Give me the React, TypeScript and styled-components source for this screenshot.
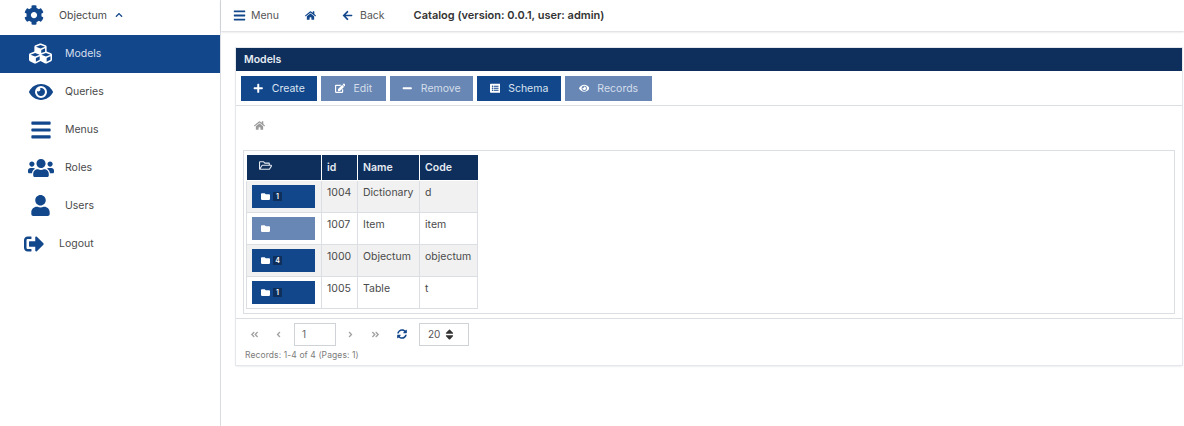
import React from 'react';
import styled, { createGlobalStyle } from 'styled-components';
import {
  FaAngleDoubleLeft,
  FaAngleDoubleRight,
  FaAngleLeft,
  FaAngleRight,
  FaArrowLeft,
  FaBars,
  FaChevronUp,
  FaCog,
  FaCubes,
  FaEdit,
  FaEye,
  FaFolder,
  FaRegFolderOpen,
  FaHome,
  FaListAlt,
  FaMinus,
  FaPlus,
  FaSignOutAlt,
  FaSort,
  FaSyncAlt,
  FaUser,
  FaUsers
} from 'react-icons/fa';

const NAVY = '#0e2f5c';
const BLUE = '#12478c';
const MUTED = '#6887b4';
const TEXT = '#4a4a4a';
const LINE = '#dbdfe4';

const GlobalStyle = createGlobalStyle`
  html, body {
    margin: 0;
    padding: 0;
    background: #fff;
    font-family: Inter, "Liberation Sans", sans-serif;
    font-size: 10.5px;
    color: ${TEXT};
  }
  * {
    box-sizing: border-box;
  }
`;

const Layout = styled.div`
  display: flex;
  width: 1184px;
  height: 426px;
  overflow: hidden;
`;

const Sidebar = styled.aside`
  width: 221px;
  flex: none;
  border-right: 1px solid #d9dde3;
`;

const NavRow = styled.div<{ $sub?: boolean; $active?: boolean; $first?: boolean }>`
  display: flex;
  align-items: center;
  height: ${p => (p.$first ? '35px' : '38px')};
  padding-bottom: ${p => (p.$first ? '5px' : '1px')};
  padding-left: ${p => (p.$sub ? '24px' : '20px')};
  background: ${p => (p.$active ? BLUE : 'transparent')};
  color: ${p => (p.$active ? '#d5dfee' : TEXT)};
  font-size: 10.5px;
`;

const NavIcon = styled.span<{ $sub?: boolean; $active?: boolean; $size: number }>`
  display: flex;
  align-items: center;
  justify-content: center;
  width: ${p => (p.$sub ? '33px' : '27px')};
  margin-right: ${p => (p.$sub ? '8px' : '12px')};
  color: ${p => (p.$active ? '#fff' : BLUE)};
  font-size: ${p => p.$size}px;
`;

const Caret = styled.span`
  display: flex;
  margin-left: 8px;
  color: ${BLUE};
  font-size: 8px;
`;

const Main = styled.main`
  flex: 1;
  min-width: 0;
`;

const TopBar = styled.header`
  display: flex;
  align-items: center;
  height: 31px;
  padding-left: 12px;
  padding-bottom: 1px;
  box-shadow: 0 1px 2px rgba(40, 50, 70, 0.2);
  font-size: 10.5px;
`;

const TopItem = styled.span<{ $after: number; $gap: number; $icon?: number }>`
  display: flex;
  align-items: center;
  gap: ${p => p.$gap}px;
  margin-right: ${p => p.$after}px;
  color: #555;
  svg {
    color: ${BLUE};
    font-size: ${p => p.$icon ?? 11}px;
  }
`;

const TopTitle = styled.span`
  font-size: 11px;
  font-weight: 600;
  color: #333;
`;

const Content = styled.div`
  padding: 17px 2px 0 15px;
`;

const Panel = styled.section`
  background: #fff;
  box-shadow: 0 0 0 1px #e4e7eb, 0 1px 2px rgba(40, 50, 70, 0.18);
`;

const PanelTitle = styled.h2`
  margin: 0;
  height: 23px;
  padding-left: 8px;
  line-height: 23px;
  background: ${NAVY};
  color: #e6ebf3;
  font-size: 10.5px;
  font-weight: 600;
`;

const Toolbar = styled.div`
  display: flex;
  gap: 4px;
  padding: 5px 5px 4px;
  border-bottom: 1px solid ${LINE};
`;

const ActionButton = styled.button<{ $disabled?: boolean; $width: number }>`
  display: flex;
  align-items: center;
  justify-content: center;
  gap: 8px;
  width: ${p => p.$width}px;
  height: 25px;
  padding: 0;
  border: 0;
  background: ${p => (p.$disabled ? MUTED : BLUE)};
  color: ${p => (p.$disabled ? '#d4deeb' : '#dbe4f0')};
  font: inherit;
  font-size: 10.5px;
  svg {
    color: #fff;
    font-size: 10.5px;
  }
`;

const Breadcrumb = styled.div`
  display: flex;
  align-items: center;
  height: 40px;
  padding-left: 18px;
  padding-bottom: 2px;
  color: #9b9b9b;
  font-size: 11px;
`;

const TableBox = styled.div`
  margin: 4px 7px 4px;
  padding: 4px 2px;
  border: 1px solid ${LINE};
`;

const DataTable = styled.table`
  border-collapse: collapse;
  table-layout: fixed;
  width: 231px;
`;

const HeadCell = styled.th<{ $w: number }>`
  width: ${p => p.$w}px;
  height: 25px;
  padding: 0 0 0 5px;
  border: 1px solid #fff;
  border-top: 0;
  background: ${NAVY};
  color: #e6ebf3;
  font-size: 10.5px;
  font-weight: 600;
  text-align: left;
  &:first-child {
    border-left: 0;
    padding-left: 12px;
    font-size: 13px;
  }
  &:last-child {
    border-right: 0;
  }
`;

const Row = styled.tr<{ $shaded?: boolean }>`
  background: ${p => (p.$shaded ? '#f1f1f1' : '#fff')};
`;

const Cell = styled.td`
  height: 32px;
  padding: 5px 0 0 5px;
  border: 1px solid ${LINE};
  vertical-align: top;
  font-size: 10.5px;
  line-height: 13px;
  white-space: nowrap;
`;

const FolderCell = styled(Cell)`
  padding: 4px 5px 0;
`;

const FolderButton = styled.div<{ $empty?: boolean }>`
  display: flex;
  align-items: center;
  gap: 3px;
  width: 63px;
  height: 23px;
  padding-left: 9px;
  background: ${p => (p.$empty ? MUTED : BLUE)};
  color: #fff;
  font-size: 9px;
`;

const Count = styled.span`
  display: block;
  min-width: 9px;
  height: 9px;
  padding: 0 2px;
  background: ${NAVY};
  color: #fff;
  font-size: 7px;
  font-weight: 600;
  line-height: 9px;
  text-align: center;
`;

const Pager = styled.div`
  border-top: 1px solid ${LINE};
  padding: 4px 0 4px 9px;
`;

const PagerRow = styled.div`
  display: flex;
  align-items: center;
  height: 23px;
`;

const PagerIcon = styled.span<{ $w: number; $active?: boolean }>`
  display: flex;
  justify-content: center;
  width: ${p => p.$w}px;
  color: ${p => (p.$active ? BLUE : '#a3a3a3')};
  font-size: ${p => (p.$active ? '10px' : '9px')};
`;

const PageInput = styled.div`
  display: flex;
  align-items: center;
  width: 42px;
  height: 23px;
  padding-left: 7px;
  border: 1px solid #cfd3d8;
  color: #666;
  font-size: 10px;
`;

const SizeSelect = styled.div`
  display: flex;
  align-items: center;
  justify-content: space-between;
  width: 50px;
  height: 23px;
  padding: 0 12px 0 8px;
  border: 1px solid #cfd3d8;
  color: #555;
  font-size: 10px;
  svg {
    color: #333;
    font-size: 13px;
  }
`;

const RecordsNote = styled.div`
  margin-top: 3px;
  color: #7b7b7b;
  font-size: 8.5px;
  line-height: 12px;
  letter-spacing: 0.1px;
`;

const navItems = [
  { label: 'Models', icon: <FaCubes />, size: 23, active: true },
  { label: 'Queries', icon: <FaEye />, size: 24 },
  { label: 'Menus', icon: <FaBars />, size: 22 },
  { label: 'Roles', icon: <FaUsers />, size: 26 },
  { label: 'Users', icon: <FaUser />, size: 21 }
];

const actions = [
  { label: 'Create', icon: <FaPlus />, width: 76 },
  { label: 'Edit', icon: <FaEdit />, width: 65, disabled: true },
  { label: 'Remove', icon: <FaMinus />, width: 83, disabled: true },
  { label: 'Schema', icon: <FaListAlt />, width: 84 },
  { label: 'Records', icon: <FaEye />, width: 87, disabled: true }
];

const records = [
  { count: '1', id: 1004, name: 'Dictionary', code: 'd' },
  { count: '', id: 1007, name: 'Item', code: 'item' },
  { count: '4', id: 1000, name: 'Objectum', code: 'objectum' },
  { count: '1', id: 1005, name: 'Table', code: 't' }
];

const App: React.FC = () => {
  return (
    <Layout>
      <GlobalStyle />
      <Sidebar>
        <NavRow $first>
          <NavIcon $size={20}><FaCog /></NavIcon>
          Objectum
          <Caret><FaChevronUp /></Caret>
        </NavRow>
        {navItems.map(item => (
          <NavRow key={item.label} $sub $active={item.active}>
            <NavIcon $sub $active={item.active} $size={item.size}>{item.icon}</NavIcon>
            {item.label}
          </NavRow>
        ))}
        <NavRow>
          <NavIcon $size={20}><FaSignOutAlt /></NavIcon>
          Logout
        </NavRow>
      </Sidebar>
      <Main>
        <TopBar>
          <TopItem $after={26} $gap={5} $icon={13}><FaBars />Menu</TopItem>
          <TopItem $after={26} $gap={8}><FaHome /></TopItem>
          <TopItem $after={29} $gap={7}><FaArrowLeft />Back</TopItem>
          <TopTitle>Catalog (version: 0.0.1, user: admin)</TopTitle>
        </TopBar>
        <Content>
          <Panel>
            <PanelTitle>Models</PanelTitle>
            <Toolbar>
              {actions.map(a => (
                <ActionButton key={a.label} $width={a.width} $disabled={a.disabled}>
                  {a.icon}
                  {a.label}
                </ActionButton>
              ))}
            </Toolbar>
            <Breadcrumb><FaHome /></Breadcrumb>
            <TableBox>
              <DataTable>
                <thead>
                  <tr>
                    <HeadCell $w={75}><FaRegFolderOpen /></HeadCell>
                    <HeadCell $w={36}>id</HeadCell>
                    <HeadCell $w={62}>Name</HeadCell>
                    <HeadCell $w={58}>Code</HeadCell>
                  </tr>
                </thead>
                <tbody>
                  {records.map((r, i) => (
                    <Row key={r.id} $shaded={i % 2 === 0}>
                      <FolderCell>
                        <FolderButton $empty={!r.count}>
                          <FaFolder />
                          {r.count && <Count>{r.count}</Count>}
                        </FolderButton>
                      </FolderCell>
                      <Cell>{r.id}</Cell>
                      <Cell>{r.name}</Cell>
                      <Cell>{r.code}</Cell>
                    </Row>
                  ))}
                </tbody>
              </DataTable>
            </TableBox>
            <Pager>
              <PagerRow>
                <PagerIcon $w={18}><FaAngleDoubleLeft /></PagerIcon>
                <PagerIcon $w={31}><FaAngleLeft /></PagerIcon>
                <PageInput>1</PageInput>
                <PagerIcon $w={29}><FaAngleRight /></PagerIcon>
                <PagerIcon $w={21}><FaAngleDoubleRight /></PagerIcon>
                <PagerIcon $w={31} $active><FaSyncAlt /></PagerIcon>
                <PagerIcon $w={2} />
                <SizeSelect>20<FaSort /></SizeSelect>
              </PagerRow>
              <RecordsNote>Records: 1-4 of 4 (Pages: 1)</RecordsNote>
            </Pager>
          </Panel>
        </Content>
      </Main>
    </Layout>
  );
};

export default App;
